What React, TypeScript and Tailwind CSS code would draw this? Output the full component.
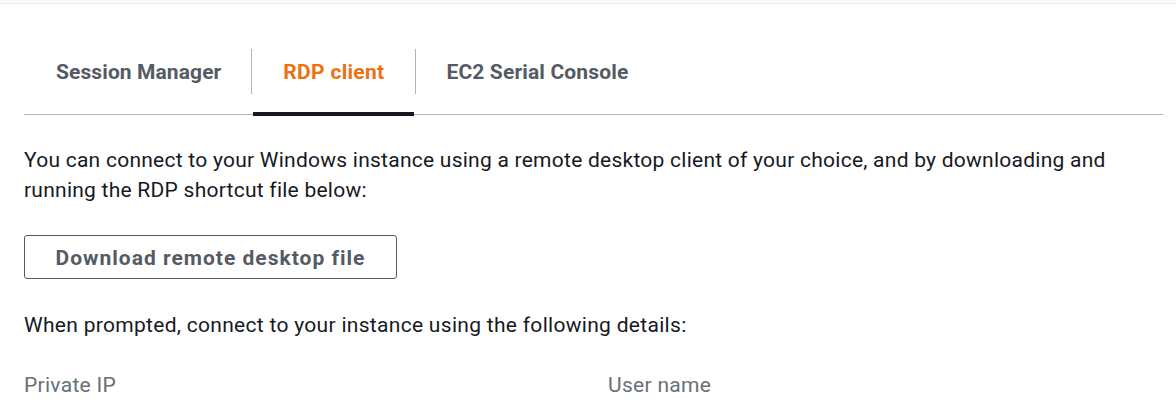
import React from "react";

export default function App() {
  return (
    <div className="w-[1176px] h-[400px] overflow-hidden bg-white text-[#16191f]" style={{ fontFamily: "Roboto, 'Noto Sans', sans-serif" }}>
      <div className="h-[4px] bg-[#fafafa] border-b border-[#eaeded]" />
      <div className="pl-[24px] pr-[13px]">
        <div className="mt-[44px] flex border-b border-[#aab7b8] h-[67px]">
          <div className="flex items-start">
            <div className="pl-[32px] pr-[30px] pt-[9px] text-[21px] font-bold tracking-[0.1px] text-[#545b64]">Session Manager</div>
          </div>
          <div className="w-px h-[45px] bg-[#aab7b8] mt-[1px]" />
          <div className="relative flex items-start w-[163px] justify-center">
            <div className="pt-[9px] text-[21px] font-bold tracking-[0.3px] text-[#ec7211]">RDP client</div>
            <div className="absolute left-[1px] right-[1px] bottom-[-2px] h-[4px] bg-[#16191f]" />
          </div>
          <div className="w-px h-[45px] bg-[#aab7b8] mt-[1px]" />
          <div className="pl-[30px] pt-[9px] text-[21px] font-bold tracking-[0.15px] text-[#545b64]">EC2 Serial Console</div>
        </div>
        <p className="mt-[30px] text-[21px] leading-[30px] tracking-[0.25px]">
          You can connect to your Windows instance using a remote desktop client of your choice, and by downloading and running the RDP shortcut file below:
        </p>
        <button className="mt-[30px] w-[373px] h-[44px] pt-[4px] border border-[#545b64] rounded-[3px] text-[21px] font-bold tracking-[1px] text-[#545b64] bg-white">
          Download remote desktop file
        </button>
        <p className="mt-[31px] text-[21px] leading-[30px] tracking-[0.3px]">When prompted, connect to your instance using the following details:</p>
        <div className="mt-[30px] grid grid-cols-2 gap-x-[29px] text-[21px] leading-[30px] tracking-[0.3px] text-[#687078]">
          <div>Private IP</div>
          <div>User name</div>
        </div>
      </div>
    </div>
  );
}
